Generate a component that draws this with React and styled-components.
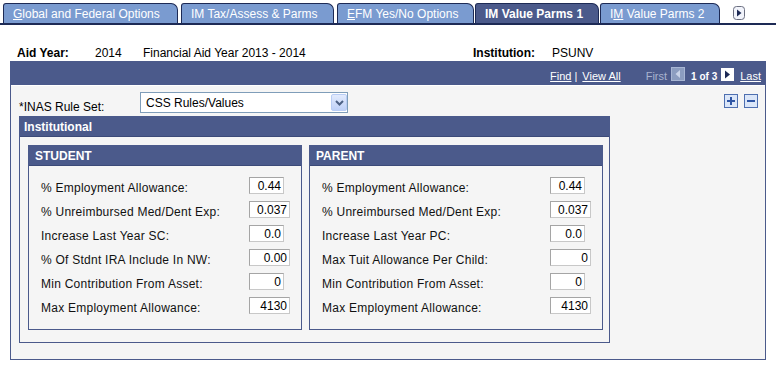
import React from 'react';
import styled, { createGlobalStyle } from 'styled-components';

const GlobalStyle = createGlobalStyle`
  body {
    margin: 0;
    background: #ffffff;
    font-family: "Liberation Sans", Arial, sans-serif;
    font-size: 12px;
    color: #000000;
  }
`;

const Page = styled.div`
  width: 776px;
  height: 369px;
  overflow: hidden;
`;

const TabBar = styled.div`
  display: flex;
  align-items: flex-end;
  margin-top: 3px;
  padding-left: 3px;
  height: 20px;
  border-bottom: 2px solid #1d2a55;
`;

const Tab = styled.div`
  box-sizing: border-box;
  display: flex;
  align-items: center;
  width: ${p => p.width}px;
  height: 20px;
  margin-left: ${p => p.gap || 0}px;
  padding: 1px 0 0 9px;
  border: 1px solid #1d2a55;
  border-bottom: none;
  border-radius: 3px 7px 0 0;
  background: ${p => (p.active ? '#4b5a8b' : '#7a9bd0')};
  color: #ffffff;
  font-weight: ${p => (p.active ? 'bold' : 'normal')};
  white-space: nowrap;
`;

const TabScroll = styled.span`
  display: flex;
  align-self: center;
  margin-left: 13px;
`;

const InfoRow = styled.div`
  display: flex;
  margin-top: 21px;
  padding-left: 17px;
  line-height: 14px;
`;

const InfoLabel = styled.span`
  width: ${p => p.width}px;
  font-weight: bold;
`;

const InfoValue = styled.span`
  width: ${p => (p.width ? `${p.width}px` : 'auto')};
`;

const Scroll = styled.div`
  box-sizing: border-box;
  width: 756px;
  margin: 1px 0 0 10px;
  border: 1px solid #4b5a8b;
  background: #f5f5f5;
`;

const ScrollHeader = styled.div`
  display: flex;
  justify-content: flex-end;
  align-items: flex-end;
  height: 23px;
  padding: 0 4px 2px 0;
  box-sizing: border-box;
  background: #4b5a8b;
  color: #ffffff;
  font-size: 11px;
  line-height: 13px;
`;

const NavLink = styled.span`
  margin-left: ${p => p.gap || 0}px;
  color: #ffffff;
  text-decoration: underline;
`;

const NavSep = styled.span`
  margin: 0 5px 0 3px;
`;

const NavDim = styled.span`
  margin-left: ${p => p.gap || 0}px;
  color: #a9b3cf;
`;

const NavCount = styled.span`
  margin-left: ${p => p.gap || 0}px;
  font-size: 10px;
  font-weight: bold;
`;

const NavIcon = styled.span`
  display: flex;
  margin-left: ${p => p.gap || 0}px;
  margin-bottom: 2px;
`;

const ScrollBody = styled.div`
  padding: 6px 7px 16px 8px;
  border-top: 1px solid #ffffff;
`;

const RuleRow = styled.div`
  display: flex;
  align-items: flex-start;
  height: 20px;
  margin-bottom: 4px;
`;

const RuleLabel = styled.span`
  width: 121px;
  padding-top: 8px;
  line-height: 14px;
`;

const SelectBox = styled.div`
  box-sizing: border-box;
  position: relative;
  display: flex;
  align-items: center;
  width: 208px;
  height: 21px;
  padding-left: 5px;
  border: 1px solid #7f9db9;
  background: #ffffff;
  font-size: 12px;
`;

const SelectButton = styled.span`
  position: absolute;
  right: 0;
  top: 1px;
  display: flex;
  align-items: center;
  justify-content: center;
  width: 16px;
  height: 17px;
  box-sizing: border-box;
  border: 1px solid #b9cdf5;
  border-radius: 2px;
  background: linear-gradient(#e3ebfd, #bfd1f8);
`;

const RowTools = styled.div`
  display: flex;
  gap: 6px;
  margin: 2px 0 0 auto;
`;

const ToolButton = styled.span`
  box-sizing: border-box;
  display: flex;
  align-items: center;
  justify-content: center;
  width: 14px;
  height: 14px;
  border: 1px solid #4e6fb0;
  background: #dbe6f8;
`;

const Group = styled.div`
  box-sizing: border-box;
  width: 591px;
  border: 1px solid #4b5a8b;
`;

const GroupHeader = styled.div`
  display: flex;
  align-items: center;
  height: 20px;
  padding-left: ${p => p.indent}px;
  background: #4b5a8b;
  color: #ffffff;
  font-weight: bold;
  border-bottom: 1px solid #3c4a78;
  box-sizing: border-box;
`;

const GroupBody = styled.div`
  display: flex;
  gap: 7px;
  padding: 8px 6px 12px 8px;
`;

const Panel = styled.div`
  box-sizing: border-box;
  width: ${p => p.width}px;
  border: 1px solid #4b5a8b;
`;

const PanelBody = styled.div`
  padding: 11px 0 8px 12px;
`;

const FieldRow = styled.div`
  display: flex;
  align-items: flex-start;
  height: 24px;
`;

const FieldLabel = styled.span`
  width: ${p => p.width}px;
  padding-top: 4px;
  line-height: 14px;
  letter-spacing: 0.25px;
  white-space: nowrap;
  color: #111111;
`;

const FieldInput = styled.span`
  box-sizing: border-box;
  display: flex;
  align-items: center;
  justify-content: flex-end;
  width: ${p => p.width}px;
  height: 17px;
  padding-right: 2px;
  border: 1px solid #a5a5a5;
  border-right-color: #c8c8c8;
  border-bottom-color: #c8c8c8;
  background: #ffffff;
  line-height: 14px;
`;

const tabs = [
  { key: 'g', label: <><u>G</u>lobal and Federal Options</>, width: 175, gap: 0 },
  { key: 't', label: 'IM Tax/Assess & Parms', width: 153, gap: 3 },
  { key: 'e', label: <><u>E</u>FM Yes/No Options</>, width: 137, gap: 3 },
  { key: 'v1', label: 'IM Value Parms 1', width: 124, gap: 1, active: true },
  { key: 'v2', label: <>I<u>M</u> Value Parms 2</>, width: 120, gap: 1 },
];

const student = [
  ['% Employment Allowance:', '0.44', 35],
  ['% Unreimbursed Med/Dent Exp:', '0.037', 41],
  ['Increase Last Year SC:', '0.0', 35],
  ['% Of Stdnt IRA Include In NW:', '0.00', 41],
  ['Min Contribution From Asset:', '0', 35],
  ['Max Employment Allowance:', '4130', 41],
];

const parent = [
  ['% Employment Allowance:', '0.44', 35],
  ['% Unreimbursed Med/Dent Exp:', '0.037', 41],
  ['Increase Last Year PC:', '0.0', 35],
  ['Max Tuit Allowance Per Child:', '0', 41],
  ['Min Contribution From Asset:', '0', 35],
  ['Max Employment Allowance:', '4130', 41],
];

const ScrollArrow = () => (
  <svg width="12" height="14" viewBox="0 0 12 14">
    <rect x="0.5" y="0.5" width="11" height="13" rx="3" fill="#f2f4fb" stroke="#6b6f80" />
    <path d="M4 3.5 L8.5 7 L4 10.5 Z" fill="#1d2a55" />
  </svg>
);

const PrevIcon = () => (
  <svg width="14" height="14" viewBox="0 0 14 14">
    <rect x="0" y="0" width="14" height="14" fill="#8c9dc0" />
    <rect x="0.5" y="0.5" width="13" height="13" fill="none" stroke="#a8b6d4" />
    <path d="M9 3 L4.5 7 L9 11 Z" fill="#c9d3e8" />
  </svg>
);

const NextIcon = () => (
  <svg width="13" height="13" viewBox="0 0 13 13">
    <rect x="0" y="0" width="13" height="13" fill="#ffffff" />
    <path d="M4 2.5 L9 6.5 L4 10.5 Z" fill="#1d2a55" />
  </svg>
);

const Chevron = () => (
  <svg width="9" height="6" viewBox="0 0 9 6">
    <path d="M1 1 L4.5 4.5 L8 1" fill="none" stroke="#4d6185" strokeWidth="2" />
  </svg>
);

const PlusGlyph = () => (
  <svg width="10" height="10" viewBox="0 0 10 10">
    <path d="M5 1 V9 M1 5 H9" stroke="#2f56a5" strokeWidth="2" />
  </svg>
);

const MinusGlyph = () => (
  <svg width="10" height="10" viewBox="0 0 10 10">
    <path d="M1 5 H9" stroke="#2f56a5" strokeWidth="2" />
  </svg>
);

const FieldPanel = ({ title, width, labelWidth, rows }) => (
  <Panel width={width}>
    <GroupHeader indent={6}>{title}</GroupHeader>
    <PanelBody>
      {rows.map(([label, value, w]) => (
        <FieldRow key={label}>
          <FieldLabel width={labelWidth}>{label}</FieldLabel>
          <FieldInput width={w}>{value}</FieldInput>
        </FieldRow>
      ))}
    </PanelBody>
  </Panel>
);

export default function App() {
  return (
    <Page>
      <GlobalStyle />
      <TabBar>
        {tabs.map(t => (
          <Tab key={t.key} width={t.width} gap={t.gap} active={t.active}>
            <span>{t.label}</span>
          </Tab>
        ))}
        <TabScroll><ScrollArrow /></TabScroll>
      </TabBar>

      <InfoRow>
        <InfoLabel width={78}>Aid Year:</InfoLabel>
        <InfoValue width={48}>2014</InfoValue>
        <InfoValue width={330}>Financial Aid Year 2013 - 2014</InfoValue>
        <InfoLabel width={79}>Institution:</InfoLabel>
        <InfoValue>PSUNV</InfoValue>
      </InfoRow>

      <Scroll>
        <ScrollHeader>
          <NavLink>Find</NavLink>
          <NavSep>|</NavSep>
          <NavLink>View All</NavLink>
          <NavDim gap={25}>First</NavDim>
          <NavIcon gap={4}><PrevIcon /></NavIcon>
          <NavCount gap={6}>1 of 3</NavCount>
          <NavIcon gap={4}><NextIcon /></NavIcon>
          <NavLink gap={6}>Last</NavLink>
        </ScrollHeader>
        <ScrollBody>
          <RuleRow>
            <RuleLabel>*INAS Rule Set:</RuleLabel>
            <SelectBox>
              CSS Rules/Values
              <SelectButton><Chevron /></SelectButton>
            </SelectBox>
            <RowTools>
              <ToolButton><PlusGlyph /></ToolButton>
              <ToolButton><MinusGlyph /></ToolButton>
            </RowTools>
          </RuleRow>
          <Group>
            <GroupHeader indent={4}>Institutional</GroupHeader>
            <GroupBody>
              <FieldPanel title="STUDENT" width={274} labelWidth={208} rows={student} />
              <FieldPanel title="PARENT" width={294} labelWidth={228} rows={parent} />
            </GroupBody>
          </Group>
        </ScrollBody>
      </Scroll>
    </Page>
  );
}
